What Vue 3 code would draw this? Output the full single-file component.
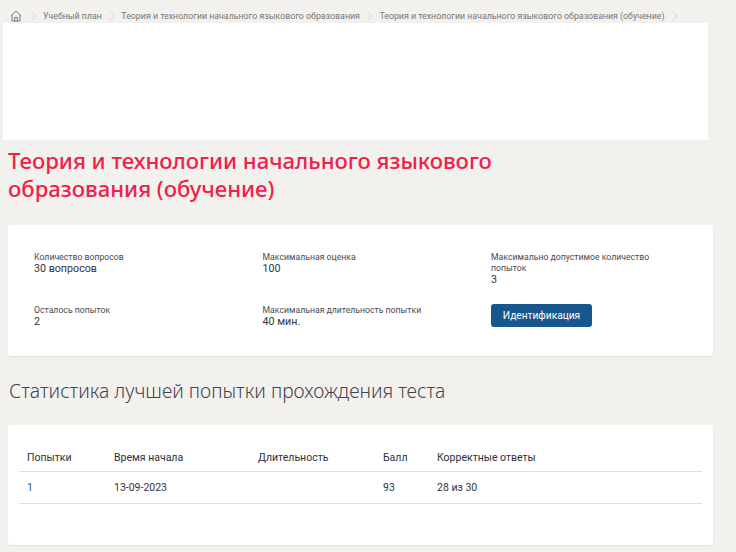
<script setup>
const crumbs = [
  'Учебный план',
  'Теория и технологии начального языкового образования',
  'Теория и технологии начального языкового образования (обучение)'
]
const info = [
  { label: 'Количество вопросов', value: '30 вопросов' },
  { label: 'Максимальная оценка', value: '100' },
  { label: 'Максимально допустимое количество попыток', value: '3' },
  { label: 'Осталось попыток', value: '2' },
  { label: 'Максимальная длительность попытки', value: '40 мин.' }
]
</script>

<template>
  <div class="page">
    <nav class="crumbs">
      <svg class="home" width="12" height="12" viewBox="0 0 12 12" fill="none" stroke="#77777a" stroke-width="1">
        <path d="M0.8 6 L6 1 L11.2 6" />
        <path d="M2 5 V11 H10 V5" />
        <path d="M4.6 11 V7.5 H7.4 V11" />
      </svg>
      <svg class="chev" width="6" height="10" viewBox="0 0 6 10" fill="none" stroke="#d8d8d8"><path d="M0.5 0.5 L5 5 L0.5 9.5" /></svg>
      <template v-for="c in crumbs" :key="c">
        <span class="crumb">{{ c }}</span>
        <svg class="chev" width="6" height="10" viewBox="0 0 6 10" fill="none" stroke="#d8d8d8"><path d="M0.5 0.5 L5 5 L0.5 9.5" /></svg>
      </template>
    </nav>
    <div class="banner"></div>
    <h1 class="title">Теория и технологии начального языкового образования (обучение)</h1>
    <section class="card info">
      <div v-for="i in info" :key="i.label" class="cell">
        <div class="label">{{ i.label }}</div>
        <div class="value">{{ i.value }}</div>
      </div>
      <div class="cell">
        <button class="btn" type="button">Идентификация</button>
      </div>
    </section>
    <h2 class="subtitle">Статистика лучшей попытки прохождения теста</h2>
    <section class="card stats">
      <table>
        <thead>
          <tr>
            <th class="c1">Попытки</th>
            <th class="c2">Время начала</th>
            <th class="c3">Длительность</th>
            <th class="c4">Балл</th>
            <th>Корректные ответы</th>
          </tr>
        </thead>
        <tbody>
          <tr>
            <td class="num">1</td>
            <td>13-09-2023</td>
            <td></td>
            <td>93</td>
            <td>28 из 30</td>
          </tr>
        </tbody>
      </table>
    </section>
  </div>
</template>

<style>
html, body { margin: 0; background: #f2f1ee; }
</style>

<style scoped>
.page {
  width: 736px;
  height: 552px;
  overflow: hidden;
  box-sizing: border-box;
  background: #f2f1ee;
  font-family: Roboto, "Open Sans", sans-serif;
  color: #33333d;
}
.crumbs {
  height: 23px;
  box-sizing: border-box;
  padding: 8px 0 0 10px;
  display: flex;
  align-items: center;
  white-space: nowrap;
}
.home { flex: none; margin-right: 9px; }
.chev { flex: none; margin-right: 6px; }
.crumb {
  font-size: 8.8px;
  color: #77777c;
  margin-right: 7.5px;
}
.banner {
  margin-left: 3px;
  width: 705px;
  height: 117px;
  background: #fff;
}
.title {
  margin: 6px 0 0 8px;
  width: 520px;
  font-family: "Noto Sans", sans-serif;
  font-size: 22.1px;
  line-height: 28px;
  font-weight: 500;
  color: #f0204a;
}
.card {
  margin-left: 8px;
  width: 705px;
  background: #fff;
  border-radius: 3px;
  box-shadow: 0 1px 1px #e0e0dd;
}
.info {
  margin-top: 23px;
  height: 131px;
  box-sizing: border-box;
  padding: 27px 26px 0;
  display: grid;
  grid-template-columns: 228.5px 228.5px 190px;
  grid-template-rows: 53px auto;
}
.label {
  font-size: 8.7px;
  line-height: 11px;
  color: #4a4a52;
}
.value {
  font-size: 10.7px;
  line-height: 11px;
  color: #33333d;
}
.btn {
  display: block;
  margin: -1px 0 0;
  width: 101px;
  height: 23px;
  padding: 0;
  border: 0;
  border-radius: 3px;
  background: #17578c;
  color: #fff;
  font-family: Roboto, sans-serif;
  font-size: 10.2px;
}
.subtitle {
  margin: 23px 0 0 9px;
  font-family: "Noto Sans", sans-serif;
  font-size: 19.3px;
  line-height: 24px;
  font-weight: 300;
  color: #44444c;
}
.stats {
  margin-top: 22px;
  height: 120px;
  box-sizing: border-box;
  padding: 17px 11px 0;
}
table {
  width: 683px;
  border-collapse: collapse;
  table-layout: fixed;
  font-size: 10.5px;
  color: #33333d;
}
th, td {
  text-align: left;
  padding: 0 0 0 8px;
  font-weight: 400;
  border-bottom: 1px solid #e0e0e0;
}
th { height: 28px; padding-top: 1px; color: #2f2f38; }
td { height: 30px; padding-bottom: 1px; }
.num { color: #1f4f7f; }
.c1 { width: 79px; }
.c2 { width: 136px; }
.c3 { width: 117px; }
.c4 { width: 46px; }
</style>
